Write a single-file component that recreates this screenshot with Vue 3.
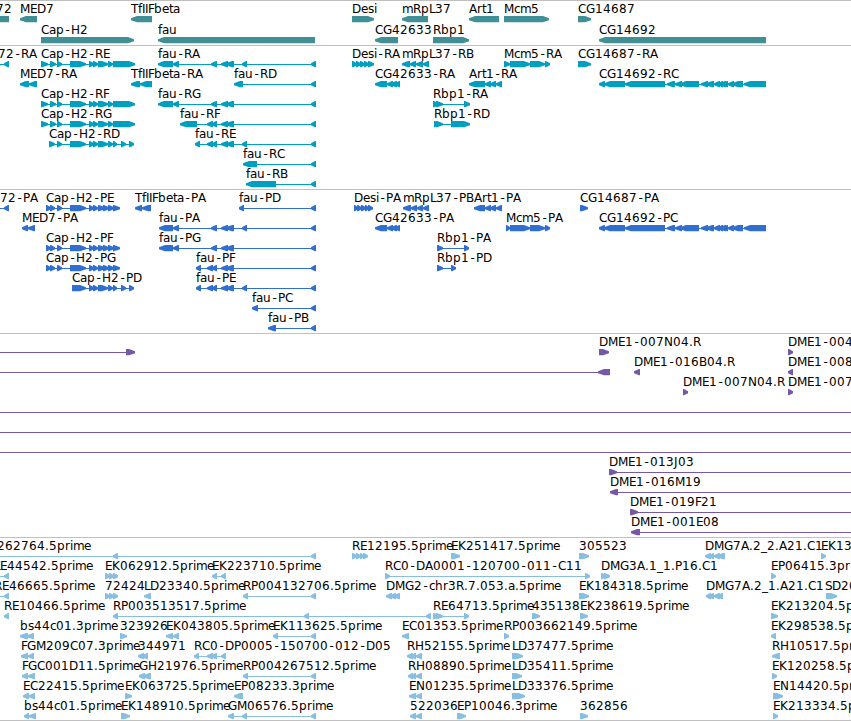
<template>
  <div class="browser">
    <section v-for="track in tracks" :key="track.name" class="track" :class="track.name">
      <svg class="canvas" :width="WIDTH" :height="track.height">
        <g v-for="(f, i) in track.features" :key="i" :transform="`translate(0 ${f.row * track.pitch})`">
          <!-- intron line -->
          <rect v-if="f.line" class="shape" :x="f.line[0]" y="18" :width="f.line[1] - f.line[0]" height="1" />
          <!-- exons -->
          <path v-for="(e, j) in f.exons" :key="j" class="shape" :d="exonPath(e, f.dir)" />
          <text v-if="f.label" class="label" y="12" :x="glyphPositions(f.label, f.x)">{{ f.label }}</text>
        </g>
      </svg>
    </section>
  </div>
</template>

<script setup>
const WIDTH = 851;
const R = 1;
const L = -1;

// glyph advances, everything else (digits included) is 8 wide
const advances = {
  D: 9, M: 10, E: 7, G: 9, H: 9, N: 9, P: 7, T: 7, F: 6, L: 6, I: 3, J: 4, S: 7,
  a: 7, c: 6, e: 7, f: 4, i: 3, m: 11, r: 5, s: 6, t: 4, '-': 7, '.': 4, _: 6,
};

const glyphPositions = (label, start) => {
  let x = start;
  return [...label].map((ch) => {
    // centre the short hyphen in its cell
    const pos = ch === '-' ? x + 1.5 : x;
    x += advances[ch] || 8;
    return pos;
  }).join(' ');
};

const exonPath = ([s, e], dir) => {
  const head = Math.min(6, e - s - 1);
  if (dir === R) {
    return `M${s} 15H${e - head}L${e} 17.3V19.2L${e - head} 21.3H${s}Z`;
  }
  return `M${e} 15H${s + head}L${s} 17.3V19.2L${s + head} 21.3H${e}Z`;
};

// feature: row, label, direction, exons, optional { x, from, to }
const feat = (row, label, dir, exons, opt = {}) => {
  const from = opt.from ?? exons[0][0];
  const to = opt.to ?? exons[exons.length - 1][1];
  const joined = exons.length > 1 || opt.from !== undefined || opt.to !== undefined;
  return { row, label, dir, exons, x: opt.x ?? from, line: joined ? [from, to] : null };
};

const genes = [
  feat(0, '72', L, [[-8, 9]], { x: -4 }),
  feat(0, 'MED7', L, [[20, 37]]),
  feat(0, 'TfIIFbeta', L, [[131, 152]]),
  feat(0, 'Desi', R, [[352, 374]]),
  feat(0, 'mRpL37', L, [[402, 428]]),
  feat(0, 'Art1', L, [[469, 499]]),
  feat(0, 'Mcm5', R, [[504, 549]]),
  feat(0, 'CG14687', R, [[578, 591]]),
  feat(1, 'Cap-H2', R, [[41, 134]]),
  feat(1, 'fau', L, [[158, 315]]),
  feat(1, 'CG42633', L, [[375, 398]]),
  feat(1, 'Rbp1', R, [[433, 469]]),
  feat(1, 'CG14692', L, [[599, 766]]),
];

// exon groups shared by several isoforms
const capStart = [[41, 48], [50, 56], [57, 62]];
const capMid = [[70, 86], [89, 94], [93, 98]];
const capR = [...capStart, ...capMid, [98, 108], [108, 113], [113, 135]];
const capTail = [[98, 108], [108, 113], [113, 117], [121, 126], [129, 134]];
const capP = [[46, 51], [50, 55], [57, 62], ...capMid, [98, 105], [103, 109], [108, 114], [113, 120]];
const fauMid = [[221, 228], [226, 234]];
const fauSmall = [242, 247];
const fauEnd = [311, 316];
const cg14692 = [
  [599, 605], [604, 625], [625, 665], [667, 675], [675, 682], [680, 699], [701, 708], [706, 714],
  [714, 720], [718, 723], [720, 726], [723, 728], [728, 734], [732, 743], [744, 766],
];
const cg42633 = [[375, 387], [387, 393], [391, 397], [395, 400]];
const art1Tail = [[485, 491], [490, 496], [496, 502]];
const mcm5Tail = [[510, 530], [530, 545], [545, 550]];

const transcripts = [
  feat(0, '72-RA', L, [[4, 9]], { x: -2, from: 0 }),
  feat(0, 'Cap-H2-RE', R, capR),
  feat(0, 'fau-RA', L, [[158, 173], [173, 179], [211, 217], ...fauMid, fauSmall, fauEnd]),
  feat(0, 'Desi-RA', R, [[352, 357], [356, 361], [360, 365], [364, 369], [368, 374]]),
  feat(0, 'mRpL37-RB', L, [[402, 410], [410, 416], [416, 423], [423, 429]]),
  feat(0, 'Mcm5-RA', R, [[504, 510], ...mcm5Tail]),
  feat(0, 'CG14687-RA', R, [[578, 591]]),
  feat(1, 'MED7-RA', L, [[20, 29], [29, 37]]),
  feat(1, 'TfIIFbeta-RA', L, [[131, 140], [140, 152]]),
  feat(1, 'fau-RD', L, [[234, 243], fauEnd]),
  feat(1, 'CG42633-RA', L, cg42633),
  feat(1, 'Art1-RA', L, [[469, 485], ...art1Tail]),
  feat(1, 'CG14692-RC', L, cg14692),
  feat(2, 'Cap-H2-RF', R, capR),
  feat(2, 'fau-RG', L, [[158, 173], [173, 179], [211, 217], ...fauMid, fauEnd]),
  feat(2, 'Rbp1-RA', R, [[433, 439], [436, 443], [464, 470]]),
  feat(3, 'Cap-H2-RG', R, capR),
  feat(3, 'fau-RF', L, [[180, 197], [207, 213], [212, 217], ...fauMid, fauEnd]),
  feat(3, 'Rbp1-RD', R, [[434, 439], [436, 443], [451, 470]]),
  feat(4, 'Cap-H2-RD', R, [[49, 55], [57, 62], ...capMid, ...capTail]),
  feat(4, 'fau-RE', L, [[195, 200], [207, 213], [212, 217], ...fauMid, fauSmall, fauEnd]),
  feat(5, 'fau-RC', L, [[243, 257], fauEnd]),
  feat(6, 'fau-RB', L, [[246, 276], fauEnd]),
];

const proteins = [
  feat(0, '72-PA', L, [[4, 9]], { x: 0, from: 0 }),
  feat(0, 'Cap-H2-PE', R, capP),
  feat(0, 'TfIIFbeta-PA', L, [[135, 142], [142, 151]]),
  feat(0, 'fau-PD', L, [[239, 244], fauEnd]),
  feat(0, 'Desi-PA', R, [[354, 358], [357, 362], [361, 366], [365, 369], [368, 373]]),
  feat(0, 'mRpL37-PB', L, [[403, 411], [411, 417], [417, 423], [423, 429]]),
  feat(0, 'Art1-PA', L, [[474, 485], ...art1Tail]),
  feat(0, 'CG14687-PA', R, [[580, 588]]),
  feat(1, 'MED7-PA', L, [[22, 28], [28, 35]]),
  feat(1, 'fau-PA', L, [[159, 173], [173, 179], [211, 217], ...fauMid, fauSmall, fauEnd]),
  feat(1, 'CG42633-PA', L, cg42633),
  feat(1, 'Mcm5-PA', R, [[506, 510], ...mcm5Tail]),
  feat(1, 'CG14692-PC', L, cg14692),
  feat(2, 'Cap-H2-PF', R, capP),
  feat(2, 'fau-PG', L, [[159, 173], [173, 179], [211, 217], ...fauMid, fauEnd]),
  feat(2, 'Rbp1-PA', R, [[437, 443], [464, 469]]),
  feat(3, 'Cap-H2-PG', R, capP),
  feat(3, 'fau-PF', L, [[196, 201], [207, 213], [212, 217], ...fauMid, fauEnd]),
  feat(3, 'Rbp1-PD', R, [[437, 443], [451, 456]]),
  feat(4, 'Cap-H2-PD', R, [[72, 86], ...capMid.slice(1), ...capTail]),
  feat(4, 'fau-PE', L, [[196, 201], [207, 213], [212, 217], ...fauMid, fauSmall, fauEnd]),
  feat(5, 'fau-PC', L, [[252, 258], fauEnd]),
  feat(6, 'fau-PB', L, [[268, 276], fauEnd]),
];

const clones = [
  feat(0, '', R, [[126, 135]], { from: 0 }),
  feat(0, 'DME1-007N04.R', R, [[599, 609]]),
  feat(0, 'DME1-004', R, [[788, 793]]),
  feat(1, '', L, [[598, 610]], { from: 0 }),
  feat(1, 'DME1-016B04.R', L, [[634, 640]]),
  feat(1, 'DME1-008', L, [[788, 793]]),
  feat(2, 'DME1-007N04.R', R, [[683, 688]]),
  feat(2, 'DME1-007', R, [[788, 793]]),
  feat(3, '', R, [], { from: 0, to: WIDTH }),
  feat(4, '', R, [], { from: 0, to: WIDTH }),
  feat(5, '', R, [], { from: 0, to: WIDTH }),
  feat(6, 'DME1-013J03', R, [[609, 617]], { to: WIDTH }),
  feat(7, 'DME1-016M19', L, [[610, 618]], { to: WIDTH }),
  feat(8, 'DME1-019F21', R, [[630, 638]], { to: WIDTH }),
  feat(9, 'DME1-001E08', L, [[631, 640]], { to: WIDTH }),
];

const ests = [
  feat(0, '262764.5prime', L, [[113, 118], fauEnd], { x: -3, from: 0 }),
  feat(0, 'RE12195.5prime', R, [[352, 357], [356, 361], [360, 364], [363, 368]]),
  feat(0, 'EK251417.5prime', R, [[451, 460]]),
  feat(0, '305523', R, [[579, 589]]),
  feat(0, 'DMG7A.2_2.A21.C1', L, [[705, 711], [709, 714], [714, 720], [717, 725]]),
  feat(0, 'EK13', R, [[821, 826]]),
  feat(1, 'LE44542.5prime', L, [[4, 9]], { x: -6, from: 0 }),
  feat(1, 'EK062912.5prime', R, [[105, 110], [109, 114], [113, 118]]),
  feat(1, 'EK223710.5prime', L, [[212, 217], [221, 226]]),
  feat(1, 'RC0-DA0001-120700-011-C11', R, [[385, 390], [585, 590]]),
  feat(1, 'DMG3A.1_1.P16.C1', R, [[601, 606], [604, 610]]),
  feat(1, 'EP06415.3pr', R, [[771, 776]]),
  feat(2, 'RE46665.5prime', L, [[4, 9]], { x: -6, from: 0 }),
  feat(2, '72424', R, [[105, 110], [109, 114], [113, 118]]),
  feat(2, 'LD23340.5prime', L, [[144, 151]]),
  feat(2, 'RP004132706.5prime', L, [[243, 248], fauEnd]),
  feat(2, 'DMG2-chr3R.7.053.a.5prime', L, [[386, 392], [390, 396], [394, 400]]),
  feat(2, 'EK184318.5prime', R, [[579, 589]]),
  feat(2, 'DMG7A.2_1.A21.C1', L, [[706, 711], [709, 714], [714, 720], [717, 723]]),
  feat(2, 'SD20', R, [[826, 837]], { x: 825 }),
  feat(3, 'RE10466.5prime', L, [[4, 9]]),
  feat(3, 'RP003513517.5prime', L, [[113, 118], [304, 309], [426, 431]]),
  feat(3, 'RE64713.5prime', R, [[433, 439], [436, 443], [464, 469]]),
  feat(3, '435138', R, [[532, 540]]),
  feat(3, 'EK238619.5prime', R, [[580, 588]]),
  feat(3, 'EK213204.5p', R, [[771, 778]]),
  feat(4, 'bs44c01.3prime', L, [[20, 28], [27, 34]]),
  feat(4, '323926', R, [[120, 127]]),
  feat(4, 'EK043805.5prime', L, [[166, 173], [173, 179]]),
  feat(4, 'EK113625.5prime', L, [[273, 278], fauEnd]),
  feat(4, 'EC01353.5prime', L, [[402, 409]]),
  feat(4, 'RP003662149.5prime', R, [[504, 509]]),
  feat(4, 'EK298538.5p', L, [[771, 776]]),
  feat(5, 'FGM209C07.3prime', L, [[21, 28], [28, 34]]),
  feat(5, '344971', L, [[138, 144], [142, 148]]),
  feat(5, 'RC0-DP0005-150700-012-D05', L, [[194, 199], [207, 213], [211, 217], [221, 226]]),
  feat(5, 'RH52155.5prime', L, [[407, 413], [411, 416], [416, 422]]),
  feat(5, 'LD37477.5prime', R, [[512, 523]]),
  feat(5, 'RH10517.5pr', L, [[772, 780]]),
  feat(6, 'FGC001D11.5prime', L, [[22, 28], [28, 35]]),
  feat(6, 'GH21976.5prime', L, [[139, 145], [143, 151]]),
  feat(6, 'RP004267512.5prime', L, [[243, 248], fauEnd]),
  feat(6, 'RH08890.5prime', L, [[408, 413], [411, 416], [416, 422]]),
  feat(6, 'LD35411.5prime', R, [[512, 522]]),
  feat(6, 'EK120258.5p', R, [[772, 777]]),
  feat(7, 'EC22415.5prime', L, [[23, 29], [29, 35]]),
  feat(7, 'EK063725.5prime', R, [[125, 132]]),
  feat(7, 'EP08233.3prime', L, [[234, 243]]),
  feat(7, 'EN01235.5prime', L, [[409, 416], [416, 422]]),
  feat(7, 'LD33376.5prime', R, [[512, 525]]),
  feat(7, 'EN14420.5pr', R, [[773, 783]]),
  feat(8, 'bs44c01.5prime', L, [[24, 29], [29, 36]]),
  feat(8, 'EK148910.5prime', R, [[121, 130]]),
  feat(8, 'GM06576.5prime', L, [[228, 234], [242, 247], fauEnd]),
  feat(8, '522036', L, [[410, 416], [416, 422]]),
  feat(8, 'EP10046.3prime', R, [[457, 466]]),
  feat(8, '362856', R, [[580, 588]]),
  feat(8, 'EK213334.5p', R, [[773, 778]]),
];

const tracks = [
  { name: 'genes', height: 44, pitch: 21, features: genes },
  { name: 'transcripts', height: 143, pitch: 20, features: transcripts },
  { name: 'proteins', height: 143, pitch: 20, features: proteins },
  { name: 'clones', height: 203, pitch: 20, features: clones },
  { name: 'ests', height: 182, pitch: 20, features: ests },
];
</script>

<style>
body {
  margin: 0;
  background: #fff;
}
</style>

<style scoped>
.browser {
  width: 851px;
  height: 721px;
  overflow: hidden;
  box-sizing: border-box;
  border-bottom: 1px solid #c0c0c0;
}

.track {
  border-top: 1px solid #c0c0c0;
}

.canvas {
  display: block;
}

.label {
  font-family: "DejaVu Sans", sans-serif;
  font-size: 12px;
  fill: #000;
}

.genes .shape {
  fill: #408f94;
}

.transcripts .shape {
  fill: #009fc0;
}

.proteins .shape {
  fill: #306fd0;
}

.clones .shape {
  fill: #7558a6;
}

.ests .shape {
  fill: #88bfe0;
}
</style>
